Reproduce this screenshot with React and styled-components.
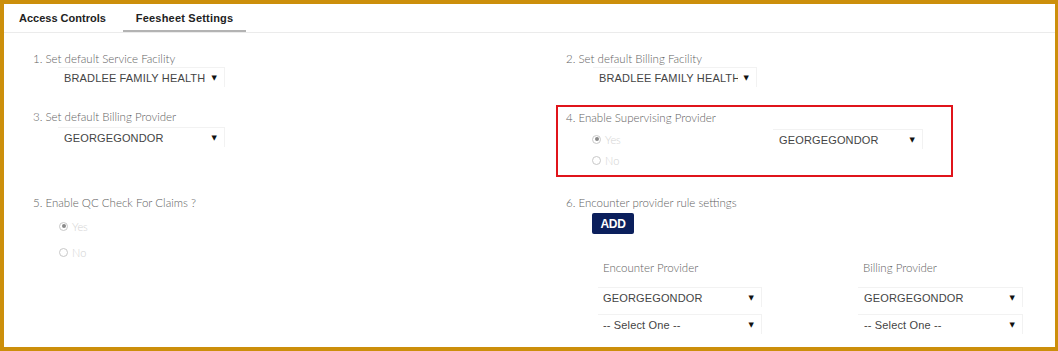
import React from "react";
import styled, { createGlobalStyle } from "styled-components";

const Global = createGlobalStyle`
  html, body { margin: 0; padding: 0; background: #fff; }
  * { box-sizing: border-box; }
`;

const Frame = styled.div`
  width: 1058px;
  height: 351px;
  overflow: hidden;
  background: #fff;
  border-style: solid;
  border-color: #cc8f0b;
  border-width: 4px 3px 4px 4px;
`;

const TabBar = styled.div`
  display: flex;
  height: 29px;
  padding-left: 3px;
  gap: 5px;
  border-bottom: 1px solid #ebebeb;
`;

const Tab = styled.div`
  padding: 0 ${(p) => (p.$active ? 13 : 12)}px;
  display: flex;
  align-items: center;
  height: 28px;
  font-family: "Liberation Sans", Arial, sans-serif;
  font-weight: bold;
  font-size: 11px;
  letter-spacing: ${(p) => (p.$active ? "0.2px" : "0")};
  color: #222;
  border-bottom: 2px solid ${(p) => (p.$active ? "#b3b3b3" : "transparent")};
  padding-top: 1px;
`;

const Grid = styled.div`
  display: grid;
  grid-template-columns: 533px 495px;
  row-gap: 18px;
  padding: 18px 0 0 19px;
  align-items: start;
`;

const Field = styled.div`
  padding-left: 10px;
  padding-top: ${(p) => p.$top || 0}px;
`;

const Label = styled.div`
  font-family: Lato, "Open Sans", sans-serif;
  font-weight: 300;
  font-size: 11.5px;
  line-height: 16px;
  color: #626262;
  white-space: nowrap;
`;

const SelectBox = styled.div`
  position: relative;
  display: flex;
  align-items: center;
  width: ${(p) => p.$w || 167}px;
  height: 20px;
  margin-left: ${(p) => p.$ml || 0}px;
  margin-top: ${(p) => p.$mt || 0}px;
  padding-left: ${(p) => p.$pl || 6}px;
  border-top: 1px solid #f2f2f2;
  border-right: 1px solid #f2f2f2;
  font-family: "Liberation Sans", Arial, sans-serif;
  font-size: 11px;
  letter-spacing: 0.15px;
  color: #444;
`;

const SelectText = styled.span`
  display: block;
  max-width: ${(p) => p.$max || 145}px;
  overflow: hidden;
  white-space: nowrap;
`;

const Arrow = styled.span`
  position: absolute;
  right: 7px;
  top: 50%;
  transform: translateY(-50%);
  font-size: 7px;
  line-height: 7px;
  color: #111;
  font-family: "DejaVu Sans", sans-serif;
`;

const Select = ({ value, w, ml, mt, pl, max }) => (
  <SelectBox $w={w} $ml={ml} $mt={mt} $pl={pl}>
    <SelectText $max={max}>{value}</SelectText>
    <Arrow>▼</Arrow>
  </SelectBox>
);

const HighlightBox = styled.div`
  width: 397px;
  border: 2px solid #e0141b;
  padding: 3px 8px 7px;
`;

const ChoiceRow = styled.div`
  display: flex;
  align-items: flex-start;
`;

const RadioList = styled.div`
  display: flex;
  flex-direction: column;
  gap: ${(p) => p.$gap}px;
  margin-left: 26px;
  margin-top: ${(p) => p.$mt || 0}px;
  width: ${(p) => p.$w || "auto"};
`;

const RadioItem = styled.div`
  display: flex;
  align-items: center;
  height: 16px;
  font-family: Lato, "Open Sans", sans-serif;
  font-weight: 300;
  font-size: 11px;
  color: #d2d2d2;
`;

const Circle = styled.span`
  width: 9px;
  height: 9px;
  border-radius: 50%;
  border: 1px solid #c8c8c8;
  margin-right: 4px;
  display: flex;
  align-items: center;
  justify-content: center;
  &::after {
    content: "";
    width: 4px;
    height: 4px;
    border-radius: 50%;
    background: ${(p) => (p.$checked ? "#8a8a8a" : "transparent")};
  }
`;

const Radio = ({ checked, children }) => (
  <RadioItem>
    <Circle $checked={checked} />
    {children}
  </RadioItem>
);

const AddButton = styled.button`
  display: block;
  margin: 2px 0 0 26px;
  width: 42px;
  height: 21px;
  padding: 0;
  border: none;
  border-radius: 2px;
  background: #0b1f5c;
  color: #fff;
  font-family: "Liberation Sans", Arial, sans-serif;
  font-weight: bold;
  font-size: 12px;
  letter-spacing: -0.3px;
`;

const RuleTable = styled.div`
  display: grid;
  grid-template-columns: 260px 165px;
  margin: 26px 0 0 32px;
  row-gap: 7px;
`;

const HeadCell = styled(Label)`
  padding-left: 5px;
  margin-bottom: 4px;
`;

export default function App() {
  return (
    <>
      <Global />
      <Frame>
        <TabBar>
          <Tab>Access Controls</Tab>
          <Tab $active>Feesheet Settings</Tab>
        </TabBar>
        <Grid>
          <Field>
            <Label>1. Set default Service Facility</Label>
            <Select value="BRADLEE FAMILY HEALTH" ml={25} />
          </Field>
          <Field>
            <Label>2. Set default Billing Facility</Label>
            <Select value="BRADLEE FAMILY HEALTH" ml={27} w={164} max={139} />
          </Field>

          <Field $top={4}>
            <Label>3. Set default Billing Provider</Label>
            <Select value="GEORGEGONDOR" ml={25} mt={2} />
          </Field>
          <HighlightBox>
            <Label>4. Enable Supervising Provider</Label>
            <ChoiceRow>
              <RadioList $gap={5} $mt={5} $w="181px">
                <Radio checked>Yes</Radio>
                <Radio>No</Radio>
              </RadioList>
              <Select value="GEORGEGONDOR" w={150} mt={3} />
            </ChoiceRow>
          </HighlightBox>

          <Field>
            <Label>5. Enable QC Check For Claims ?</Label>
            <RadioList $gap={10} $mt={7}>
              <Radio checked>Yes</Radio>
              <Radio>No</Radio>
            </RadioList>
          </Field>
          <Field>
            <Label>6. Encounter provider rule settings</Label>
            <AddButton>ADD</AddButton>
            <RuleTable>
              <HeadCell>Encounter Provider</HeadCell>
              <HeadCell>Billing Provider</HeadCell>
              <Select value="GEORGEGONDOR" w={164} pl={5} />
              <Select value="GEORGEGONDOR" w={165} pl={6} />
              <Select value="-- Select One --" w={164} pl={5} />
              <Select value="-- Select One --" w={165} pl={6} />
            </RuleTable>
          </Field>
        </Grid>
      </Frame>
    </>
  );
}
